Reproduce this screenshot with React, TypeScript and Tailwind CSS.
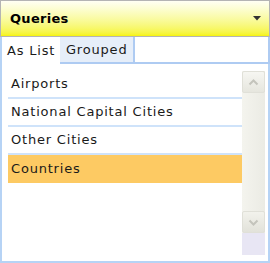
import React from "react";

const items = ["Airports", "National Capital Cities", "Other Cities", "Countries"];

function ScrollBar() {
  return (
    <div className="w-[23px] flex flex-col bg-gradient-to-r from-[#f4f4ee] to-[#ebebe4]">
      <div className="h-[22px] flex items-center justify-center rounded-[2px] border border-[#e0e0d8] bg-gradient-to-b from-[#f6f6f2] to-[#e6e6de]">
        <svg width="11" height="7" viewBox="0 0 11 7">
          <path d="M1.5 5.5 L5.5 1.5 L9.5 5.5" fill="none" stroke="#c4c4bc" strokeWidth="2" />
        </svg>
      </div>
      <div className="flex-1" />
      <div className="h-[22px] flex items-center justify-center rounded-[2px] border border-[#e0e0d8] bg-gradient-to-b from-[#f2f2ec] to-[#e2e2da]">
        <svg width="11" height="7" viewBox="0 0 11 7">
          <path d="M1.5 1.5 L5.5 5.5 L9.5 1.5" fill="none" stroke="#c4c4bc" strokeWidth="2" />
        </svg>
      </div>
      <div className="h-[22px] bg-[#e8e6f4]" />
    </div>
  );
}

export default function App() {
  return (
    <div
      className="w-[270px] h-[263px] bg-white flex flex-col text-[#1a1a1a]"
      style={{ fontFamily: '"DejaVu Sans", Verdana, sans-serif' }}
    >
      <div className="h-[37px] flex items-center justify-between pl-[9px] pr-[8px] border border-[#b4b4b4] bg-gradient-to-b from-[#fffff4] to-[#f6f400]">
        <span className="text-[13px] font-bold text-black tracking-[0.3px]">Queries</span>
        <svg width="8" height="5" viewBox="0 0 8 5">
          <path d="M0 0 H8 L4 4.5 Z" fill="#333" />
        </svg>
      </div>

      <div className="h-[27px] flex text-[13px] tracking-[0.8px]">
        <div className="w-[60px] flex items-center pl-[5px] border-l-2 border-[#b6d3f5] bg-white">
          As List
        </div>
        <div className="w-[75px] flex items-center pl-[6px] bg-[#e6eef9] border-r-2 border-b-2 border-[#aecbf2]">
          Grouped
        </div>
        <div className="flex-1 border-b-2 border-r-2 border-[#aecbf2]" />
      </div>

      <div className="flex-1 flex border-l-2 border-r-2 border-b-2 border-[#b6d3f5] pl-[6px] pr-[3px] pt-[7px] pb-[6px]">
        <div className="flex-1 flex flex-col text-[13px] tracking-[0.8px]">
          {items.map((item, i) => (
            <div
              key={item}
              className={`h-[28px] flex items-center pl-[3px] ${
                i === 3 ? "bg-[#fdca63]" : "border-b-2 border-[#cfe3fa]"
              }`}
            >
              {item}
            </div>
          ))}
        </div>
        <ScrollBar />
      </div>
    </div>
  );
}
